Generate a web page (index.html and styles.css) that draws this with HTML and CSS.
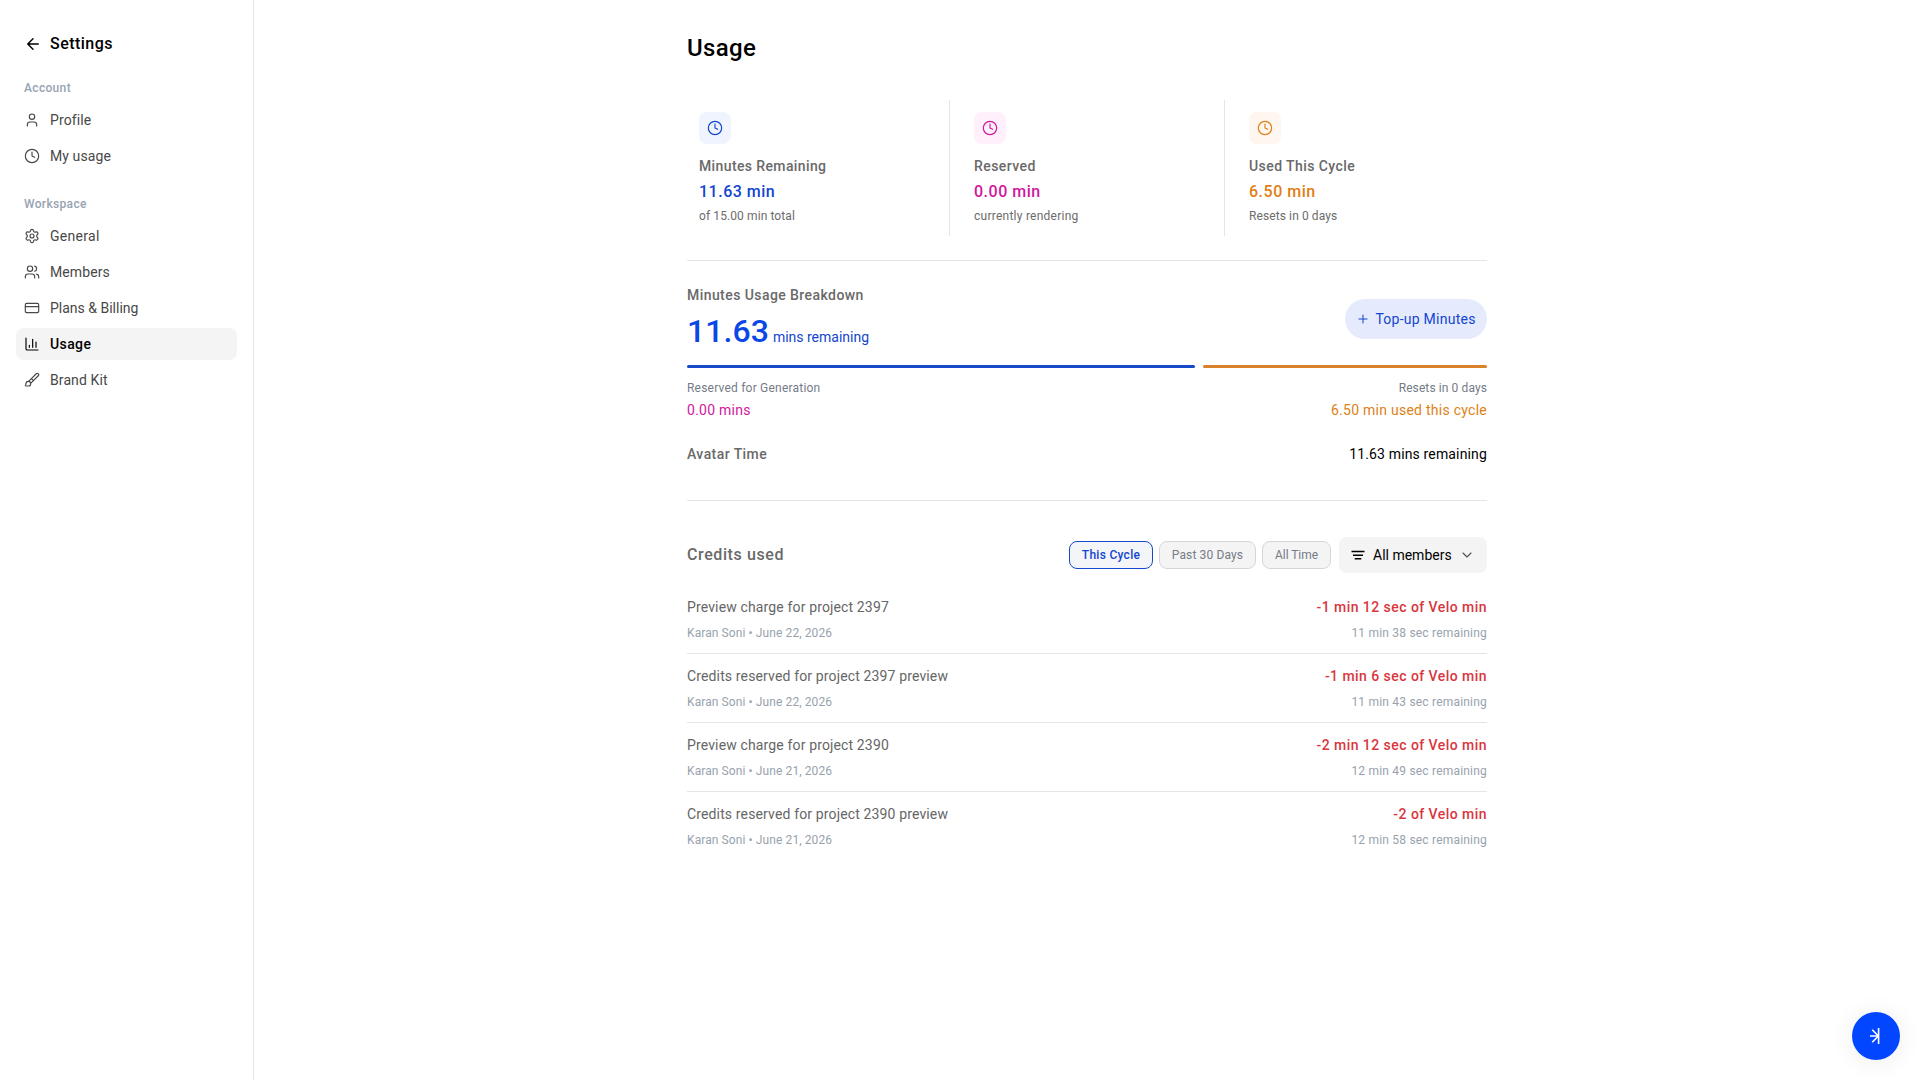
FILE: index.html
```html
<!DOCTYPE html>
<html lang="en">

<head>
    <meta charset="UTF-8">
    <meta name="viewport" content="width=device-width, initial-scale=1.0">
    <title>Settings - Usage</title>
    <link rel="stylesheet" href="styles.css">
</head>

<body>
    <aside class="sidebar">
        <div class="back">
            <svg class="icon" viewBox="0 0 24 24"><path d="m12 19-7-7 7-7M19 12H5" /></svg>
            <span>Settings</span>
        </div>
        <p class="group">Account</p>
        <nav>
            <a class="item">
                <svg class="icon" viewBox="0 0 24 24"><path d="M19 21v-2a4 4 0 0 0-4-4H9a4 4 0 0 0-4 4v2" /><circle cx="12" cy="7" r="4" /></svg>
                <span>Profile</span>
            </a>
            <a class="item">
                <svg class="icon" viewBox="0 0 24 24"><circle cx="12" cy="12" r="10" /><path d="M12 6v6l4 2" /></svg>
                <span>My usage</span>
            </a>
        </nav>
        <p class="group">Workspace</p>
        <nav>
            <a class="item general">
                <svg class="icon" viewBox="0 0 24 24"><path d="M9.671 4.136a2.34 2.34 0 0 1 4.659 0 2.34 2.34 0 0 0 3.319 1.915 2.34 2.34 0 0 1 2.33 4.033 2.34 2.34 0 0 0 0 3.831 2.34 2.34 0 0 1-2.33 4.033 2.34 2.34 0 0 0-3.319 1.915 2.34 2.34 0 0 1-4.659 0 2.34 2.34 0 0 0-3.32-1.915 2.34 2.34 0 0 1-2.33-4.033 2.34 2.34 0 0 0 0-3.831A2.34 2.34 0 0 1 6.35 6.051a2.34 2.34 0 0 0 3.319-1.915" /><circle cx="12" cy="12" r="3" /></svg>
                <span>General</span>
            </a>
            <a class="item">
                <svg class="icon" viewBox="0 0 24 24"><path d="M16 21v-2a4 4 0 0 0-4-4H6a4 4 0 0 0-4 4v2M22 21v-2a4 4 0 0 0-3-3.87M16 3.13a4 4 0 0 1 0 7.75" /><circle cx="9" cy="7" r="4" /></svg>
                <span>Members</span>
            </a>
            <a class="item billing">
                <svg class="icon" viewBox="0 0 24 24"><rect x="2" y="5" width="20" height="14" rx="2" /><path d="M2 10h20" /></svg>
                <span>Plans &amp; Billing</span>
            </a>
            <a class="item active">
                <svg class="icon" viewBox="0 0 24 24"><path d="M3 3v16a2 2 0 0 0 2 2h16M18 17V9M13 17V5M8 17v-3" /></svg>
                <span>Usage</span>
            </a>
            <a class="item">
                <svg class="icon" viewBox="0 0 24 24"><path d="m11 10 3 3M6.5 21A3.5 3.5 0 1 0 3 17.5a2.62 2.62 0 0 1-.708 1.792A1 1 0 0 0 3 21zM9.969 17.031 21.378 5.624a1 1 0 0 0-3.002-3.002L6.967 14.031" /></svg>
                <span>Brand Kit</span>
            </a>
        </nav>
    </aside>

    <main>
        <div class="content">
            <h1>Usage</h1>

            <section class="stats">
                <div class="stat blue">
                    <div class="badge"><svg class="icon" viewBox="0 0 24 24"><circle cx="12" cy="12" r="10" /><path d="M12 6v6l4 2" /></svg></div>
                    <div class="label">Minutes Remaining</div>
                    <div class="value">11.63 min</div>
                    <div class="sub tight">of 15.00 min total</div>
                </div>
                <div class="stat pink">
                    <div class="badge"><svg class="icon" viewBox="0 0 24 24"><circle cx="12" cy="12" r="10" /><path d="M12 6v6l4 2" /></svg></div>
                    <div class="label">Reserved</div>
                    <div class="value">0.00 min</div>
                    <div class="sub">currently rendering</div>
                </div>
                <div class="stat orange">
                    <div class="badge"><svg class="icon" viewBox="0 0 24 24"><circle cx="12" cy="12" r="10" /><path d="M12 6v6l4 2" /></svg></div>
                    <div class="label">Used This Cycle</div>
                    <div class="value">6.50 min</div>
                    <div class="sub tight">Resets in 0 days</div>
                </div>
            </section>

            <section class="breakdown">
                <div class="row top">
                    <div>
                        <div class="label">Minutes Usage Breakdown</div>
                        <div class="total"><b>11.63</b><span>mins remaining</span></div>
                    </div>
                    <button class="topup">
                        <svg viewBox="0 0 24 24"><path d="M5 12h14M12 5v14" /></svg>
                        <span>Top-up Minutes</span>
                    </button>
                </div>
                <div class="bar">
                    <div class="left"></div>
                    <div class="used"></div>
                </div>
                <div class="row legend">
                    <div>
                        <div class="note">Reserved for Generation</div>
                        <div class="amount pink">0.00 mins</div>
                    </div>
                    <div class="end">
                        <div class="note tight">Resets in 0 days</div>
                        <div class="amount orange">6.50 min used this cycle</div>
                    </div>
                </div>
                <div class="row avatar">
                    <div class="label">Avatar Time</div>
                    <div class="time">11.63 mins remaining</div>
                </div>
            </section>

            <section class="credits">
                <div class="head">
                    <h2>Credits used</h2>
                    <div class="filters">
                        <button class="chip on">This Cycle</button>
                        <button class="chip">Past 30 Days</button>
                        <button class="chip">All Time</button>
                        <button class="select">
                            <svg class="lines" viewBox="0 0 16 16"><path d="M1.5 4.5h13M3 8.2h10M4.7 11.8h6.6" /></svg>
                            <span>All members</span>
                            <svg class="chevron" viewBox="0 0 24 24"><path d="m6 9 6 6 6-6" /></svg>
                        </button>
                    </div>
                </div>
                <div class="entry">
                    <div class="line"><span>Preview charge for project 2397</span><b>-1 min 12 sec of Velo min</b></div>
                    <div class="meta"><span>Karan Soni • June 22, 2026</span><span class="rest">11 min 38 sec remaining</span></div>
                </div>
                <div class="entry">
                    <div class="line"><span>Credits reserved for project 2397 preview</span><b>-1 min 6 sec of Velo min</b></div>
                    <div class="meta"><span>Karan Soni • June 22, 2026</span><span class="rest">11 min 43 sec remaining</span></div>
                </div>
                <div class="entry">
                    <div class="line"><span>Preview charge for project 2390</span><b>-2 min 12 sec of Velo min</b></div>
                    <div class="meta"><span>Karan Soni • June 21, 2026</span><span class="rest">12 min 49 sec remaining</span></div>
                </div>
                <div class="entry">
                    <div class="line"><span>Credits reserved for project 2390 preview</span><b>-2 of Velo min</b></div>
                    <div class="meta"><span>Karan Soni • June 21, 2026</span><span class="rest">12 min 58 sec remaining</span></div>
                </div>
            </section>
        </div>
    </main>

    <!-- floating launcher -->
    <button class="fab">
        <svg viewBox="0 0 16 16"><path d="M10.6 0v16M2 8h8.6M4.2 1.8 10.4 8l-6.2 6.2" /></svg>
    </button>
</body>

</html>
```
FILE: styles.css
```css
* {
    box-sizing: border-box;
}

body {
    margin: 0;
    height: 100vh;
    display: flex;
    background: #fff;
    color: #000;
    font-family: Roboto, "Liberation Sans", sans-serif;
    font-size: 14px;
    line-height: 20px;
    letter-spacing: 0.14px;
}

h1, h2, p {
    margin: 0;
}

button {
    border: none;
    padding: 0;
    font: inherit;
    letter-spacing: inherit;
}

.icon {
    width: 16px;
    height: 16px;
    flex: none;
}

svg {
    fill: none;
    stroke: currentColor;
    stroke-width: 1.75;
    stroke-linecap: round;
    stroke-linejoin: round;
}

/* sidebar */
.sidebar {
    width: 254px;
    flex: none;
    padding: 32px 16px;
    border-right: 1px solid #e5e5e5;
}

.back {
    display: flex;
    align-items: center;
    gap: 8px;
    height: 24px;
    padding-left: 8px;
    font-size: 16px;
    font-weight: 500;
    letter-spacing: 0.46px;
}

.back .icon {
    width: 18px;
    height: 18px;
    stroke-width: 1.9;
}

.group {
    margin-top: 24px;
    padding-left: 8px;
    margin-bottom: 8px;
    font-size: 12px;
    line-height: 16px;
    font-weight: 500;
    letter-spacing: 0.33px;
    color: #98a2b3;
}

nav {
    display: flex;
    flex-direction: column;
    gap: 4px;
}

.item {
    display: flex;
    align-items: center;
    gap: 10px;
    height: 32px;
    padding-left: 8px;
    border-radius: 8px;
    color: #484848;
    letter-spacing: 0.1px;
}

.item.general {
    letter-spacing: 0.3px;
}

.item.billing {
    letter-spacing: 0;
}

.item.active {
    background: #f4f4f4;
    color: #000;
    font-weight: 500;
    letter-spacing: 0.4px;
}

/* page */
main {
    flex: 1;
    display: flex;
    justify-content: center;
}

.content {
    width: 800px;
    padding-top: 32px;
}

h1 {
    font-size: 24px;
    line-height: 32px;
    font-weight: 500;
    letter-spacing: 0.35px;
}

.blue { color: #1245d0; }
.pink { color: #d1179c; }
.orange { color: #de7f16; }

.label {
    font-weight: 500;
    letter-spacing: 0.43px;
    color: #696969;
}

.stats {
    display: flex;
    margin-top: 36px;
    padding-bottom: 24px;
    border-bottom: 1px solid #e5e5e5;
}

.stat {
    width: 275px;
    height: 136px;
    padding: 12px 24px;
    border-right: 1px solid #e5e5e5;
}

.stat:first-child {
    width: 263px;
    padding-left: 12px;
}

.stat:first-child .label {
    letter-spacing: 0.38px;
}

.stat:last-child {
    width: 262px;
    border-right: none;
}

.badge {
    width: 32px;
    height: 32px;
    display: flex;
    align-items: center;
    justify-content: center;
    margin-bottom: 12px;
    border-radius: 8px;
}

.blue .badge { background: #f0f4fe; }
.pink .badge { background: #fff0fb; }
.orange .badge { background: #fff6f0; }

.value {
    margin: 4px 0;
    font-size: 16px;
    line-height: 24px;
    font-weight: 500;
    letter-spacing: 0.5px;
}

.sub {
    font-size: 12px;
    line-height: 16px;
    letter-spacing: 0.25px;
    color: #6b6b6b;
}

.sub.tight, .note.tight {
    letter-spacing: 0.1px;
}

/* minutes breakdown */
.row {
    display: flex;
    justify-content: space-between;
    align-items: center;
}

.row.top {
    align-items: flex-end;
}

.breakdown {
    height: 240px;
    padding-top: 24px;
    border-bottom: 1px solid #e5e5e5;
}

.total {
    display: flex;
    align-items: baseline;
    gap: 4px;
    height: 40px;
    margin-top: 6px;
    color: #1245d0;
    letter-spacing: 0;
}

.total b {
    font-size: 32px;
    line-height: 40px;
    font-weight: 500;
    color: #0b47e6;
    letter-spacing: 0.05px;
}

.topup {
    display: flex;
    align-items: center;
    justify-content: center;
    gap: 5px;
    width: 142px;
    height: 40px;
    margin-bottom: 12px;
    border-radius: 20px;
    background: #e5ebfc;
    color: #1245d0;
    letter-spacing: 0.25px;
}

.topup svg {
    width: 14px;
    height: 14px;
}

.bar {
    display: flex;
    gap: 8px;
    height: 3px;
    margin-top: 14px;
}

.bar div {
    border-radius: 2px;
}

.bar .left {
    flex: 508;
    background: #1749c8;
}

.bar .used {
    flex: 284;
    background: #d9822b;
}

.legend {
    margin-top: 12px;
}

.note {
    font-size: 12px;
    line-height: 16px;
    letter-spacing: 0.21px;
    color: #757b87;
}

.amount {
    margin-top: 4px;
    letter-spacing: 0.26px;
}

.end {
    text-align: right;
}

.avatar {
    margin-top: 24px;
}

.time {
    letter-spacing: 0.15px;
}

/* credits */
.credits {
    padding-top: 36px;
}

.head {
    display: flex;
    justify-content: space-between;
    align-items: center;
    margin-bottom: 12px;
}

h2 {
    font-size: 16px;
    line-height: 24px;
    font-weight: 500;
    letter-spacing: 0.6px;
    color: #696969;
}

.filters {
    display: flex;
    align-items: center;
    gap: 6px;
}

.chip {
    width: 97px;
    height: 28px;
    border: 1px solid #d4d6da;
    border-radius: 8px;
    background: #f4f4f4;
    color: #757b87;
    font-size: 12px;
    letter-spacing: 0.13px;
}

.chip:nth-child(3) {
    width: 69px;
    letter-spacing: -0.05px;
}

.chip.on {
    width: 84px;
    border-color: #1749cf;
    background: #f3f5f9;
    color: #1245d0;
    font-weight: 500;
    letter-spacing: 0.28px;
}

.select {
    display: flex;
    align-items: center;
    width: 148px;
    height: 36px;
    margin-left: 2px;
    padding: 0 12px 0 11px;
    border-radius: 8px;
    background: #f4f4f4;
    color: #000;
    letter-spacing: 0;
}

.lines {
    width: 16px;
    height: 16px;
    margin-right: 7px;
    stroke-width: 1.4;
    stroke-linecap: butt;
}

.chevron {
    width: 16px;
    height: 16px;
    margin-left: auto;
    color: #555;
}

.entry {
    padding: 12px 0;
    border-bottom: 1px solid #e5e5e5;
}

.entry:last-child {
    border-bottom: none;
}

.line, .meta {
    display: flex;
    justify-content: space-between;
}

.line {
    color: #666;
}

.line b {
    color: #d9363e;
    font-weight: 500;
    letter-spacing: 0.45px;
}

.meta {
    margin-top: 8px;
    font-size: 12px;
    line-height: 16px;
    letter-spacing: 0.1px;
    color: #98a2ad;
}

.rest {
    letter-spacing: 0.2px;
}

.fab {
    position: fixed;
    right: 20px;
    bottom: 20px;
    width: 48px;
    height: 48px;
    display: flex;
    align-items: center;
    justify-content: center;
    border-radius: 50%;
    background: #0346ff;
    color: #fff;
    box-shadow: 0 2px 24px rgba(0, 0, 0, 0.08);
}

.fab svg {
    width: 16px;
    height: 16px;
    stroke-width: 1.6;
    stroke-linecap: butt;
}
```
